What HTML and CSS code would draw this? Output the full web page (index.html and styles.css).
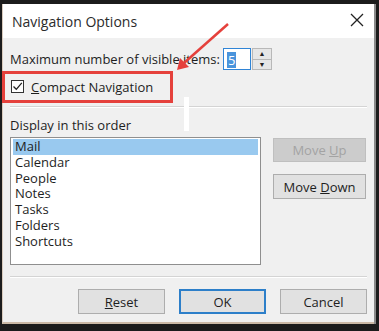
FILE: index.html
```html
<!DOCTYPE html>
<html lang="en">
<head>
    <meta charset="UTF-8">
    <meta name="viewport" content="width=device-width, initial-scale=1.0">
    <title>Navigation Options</title>
    <link rel="stylesheet" href="styles.css">
</head>
<body>

    <div class="dialog">
        <div class="titlebar">
            <span class="title">Navigation Options</span>
            <svg class="close" width="14" height="14" viewBox="0 0 14 14">
                <path d="M1 1 L13 13 M13 1 L1 13" stroke="#222" stroke-width="1.3" fill="none"/>
            </svg>
        </div>

        <div class="content">
            <div class="row-max">
                <label for="max_items">Maximum number of visible items:</label>
                <div class="spinner">
                    <div class="spin-input"><span class="sel">5</span></div>
                    <div class="spin-buttons">
                        <span class="spin-btn">&#9650;</span>
                        <span class="spin-btn">&#9660;</span>
                    </div>
                </div>
            </div>

            <div class="row-check">
                <span class="checkbox">
                    <svg width="11" height="11" viewBox="0 0 11 11">
                        <path d="M1.5 5.5 L4.3 8.3 L9.8 1.8" stroke="#222" stroke-width="1.3" fill="none"/>
                    </svg>
                </span>
                <span><u>C</u>ompact Navigation</span>
            </div>

            <div class="separator"></div>

            <div class="list-label">Display in this order</div>

            <div class="list-row">
                <ul class="listbox">
                    <li class="selected">Mail</li>
                    <li>Calendar</li>
                    <li>People</li>
                    <li>Notes</li>
                    <li>Tasks</li>
                    <li>Folders</li>
                    <li>Shortcuts</li>
                </ul>
                <div class="side-buttons">
                    <button type="button" class="btn disabled">Move <u>U</u>p</button>
                    <button type="button" class="btn">Move <u>D</u>own</button>
                </div>
            </div>

            <div class="separator bottom"></div>

            <div class="footer">
                <button type="button" class="btn"><u>R</u>eset</button>
                <button type="button" class="btn default">OK</button>
                <button type="button" class="btn">Cancel</button>
            </div>
        </div>

        <!-- annotation drawn over the dialog -->
        <div class="highlight-box"></div>
        <div class="glare"></div>
    </div>

    <svg class="arrow" width="379" height="331" viewBox="0 0 379 331">
        <line x1="228" y1="24" x2="184" y2="63" stroke="#e5413c" stroke-width="2.5"/>
        <polygon points="177,70 180,58 189,67" fill="#e5413c"/>
    </svg>

</body>
</html>
```

FILE: styles.css
```css
body {
    margin: 0;
    width: 379px;
    height: 331px;
    background-color: #1c1c1c;
    font-family: "Open Sans", "Noto Sans", sans-serif;
    color: #1e1e1e;
    position: relative;
    overflow: hidden;
}
.dialog {
    position: relative;
    margin: 4px 0 0 2px;
    width: 371px;
    height: 318px;
    background-color: #f0f0f0;
    border-left: 1px solid #d9cbbd;
    border-bottom: 2px solid #cbb9a6;
    box-shadow: 2px 0 0 #8a8a8a;
}
.titlebar {
    height: 34px;
    background-color: #fff;
    display: flex;
    align-items: center;
    justify-content: space-between;
    padding: 0 10px 0 9px;
}
.title {
    font-size: 14px;
    color: #2b2b2b;
}
.close {
    margin-top: -2px;
}
.content {
    padding: 10px 7px 0 7px;
    font-size: 13px;
}
.row-max {
    display: flex;
    align-items: center;
    height: 22px;
    gap: 3px;
}
.spinner {
    display: flex;
    height: 22px;
}
.spin-input {
    width: 28px;
    height: 22px;
    box-sizing: border-box;
    border: 1px solid #2f84d6;
    background-color: #fff;
    padding: 2px 3px;
}
.sel {
    display: inline-block;
    background-color: #4a94dc;
    color: #fff;
    line-height: 16px;
    padding: 0 1px;
}
.spin-buttons {
    width: 20px;
    margin-left: 1px;
    display: flex;
    flex-direction: column;
    border: 1px solid #b8b8b8;
    box-sizing: border-box;
    background-color: #e6e6e6;
}
.spin-btn {
    flex: 1;
    font-size: 7px;
    line-height: 10px;
    text-align: center;
    color: #222;
}
.spin-btn + .spin-btn {
    border-top: 1px solid #b8b8b8;
}
.row-check {
    display: flex;
    align-items: center;
    height: 31px;
    margin-top: 1px;
    gap: 7px;
    padding-left: 1px;
}
.checkbox {
    width: 13px;
    height: 13px;
    box-sizing: border-box;
    border: 1px solid #333;
    background-color: #fff;
    display: flex;
    align-items: center;
    justify-content: center;
}
.separator {
    height: 1px;
    background-color: #d4d4d4;
    border-bottom: 1px solid #fff;
    margin-top: 4px;
}
.list-label {
    margin-top: 9px;
    line-height: 16px;
}
.list-row {
    display: flex;
    gap: 12px;
    margin-top: 4px;
}
.listbox {
    width: 251px;
    height: 128px;
    box-sizing: border-box;
    margin: 0;
    padding: 1px 2px;
    list-style: none;
    background-color: #fff;
    border: 1px solid #8f8f8f;
}
.listbox li {
    line-height: 15.8px;
    padding-left: 2px;
}
.listbox .selected {
    background-color: #99c9ef;
}
.side-buttons {
    display: flex;
    flex-direction: column;
    gap: 12px;
    padding-top: 1px;
}
.btn {
    width: 93px;
    height: 25px;
    font-family: inherit;
    font-size: 13px;
    color: #1e1e1e;
    background-color: #e1e1e1;
    border: 1px solid #adadad;
    padding: 0;
    cursor: pointer;
}
.btn.disabled {
    height: 24px;
    color: #a3a3a3;
    background-color: #cccccc;
    border-color: #bfbfbf;
}
.btn.default {
    border: 2px solid #2d7fc9;
}
.separator.bottom {
    margin-top: 11px;
}
.footer {
    display: flex;
    justify-content: flex-end;
    gap: 14px;
    margin-top: 11px;
}
.footer .btn {
    width: 87px;
}
.highlight-box {
    position: absolute;
    left: -1px;
    top: 67px;
    width: 171px;
    height: 32px;
    box-sizing: border-box;
    border: 3px solid #e5413c;
}
.glare {
    position: absolute;
    left: 181px;
    top: 93px;
    width: 5px;
    height: 34px;
    background-color: #fff;
}
.arrow {
    position: absolute;
    left: 0;
    top: 0;
}
```
